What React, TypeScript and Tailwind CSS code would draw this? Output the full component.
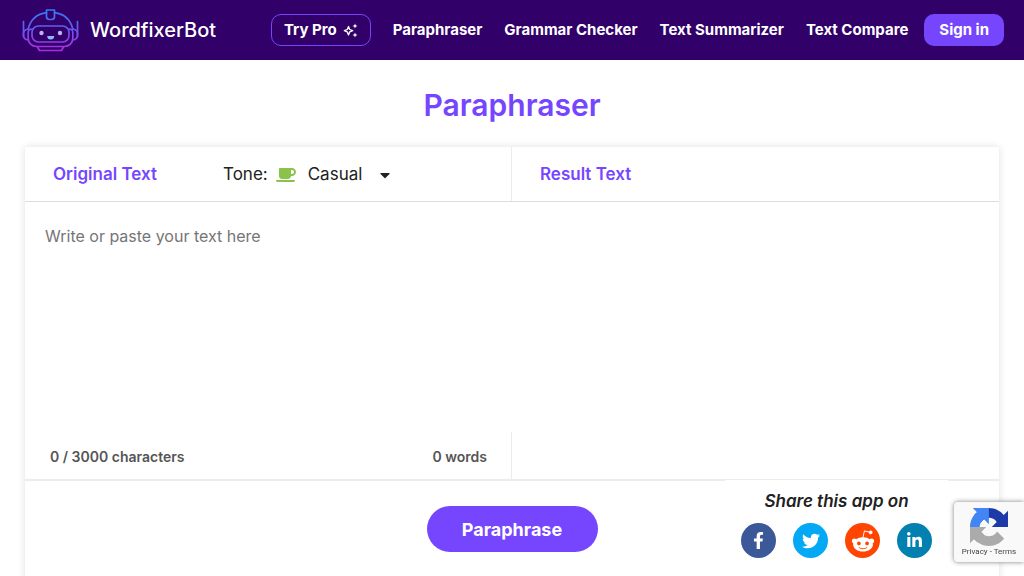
import { useState } from "react";
import {
  FaCaretDown,
  FaCoffee,
  FaFacebookF,
  FaLinkedinIn,
  FaRedditAlien,
  FaTwitter,
} from "react-icons/fa";

const navLinks = ["Paraphraser", "Grammar Checker", "Text Summarizer", "Text Compare"];

const shareLinks = [
  { name: "Facebook", Icon: FaFacebookF, color: "bg-[#3b5998]", size: 17 },
  { name: "Twitter", Icon: FaTwitter, color: "bg-[#03a9f4]", size: 18 },
  { name: "Reddit", Icon: FaRedditAlien, color: "bg-[#ff4500]", size: 24 },
  { name: "LinkedIn", Icon: FaLinkedinIn, color: "bg-[#0280b0]", size: 17 },
];

const RobotLogo = () => (
  <svg width="58" height="43" viewBox="0 0 58 43" fill="none" aria-hidden="true">
    <defs>
      <linearGradient id="robot" gradientUnits="userSpaceOnUse" x1="0" y1="0" x2="0" y2="43">
        <stop offset="0" stopColor="#2f7df6" />
        <stop offset="0.5" stopColor="#6a55f0" />
        <stop offset="1" stopColor="#b428e0" />
      </linearGradient>
    </defs>
    <g stroke="url(#robot)" strokeWidth="1.7" strokeLinecap="round" strokeLinejoin="round">
      <path d="M24.5 1h8v6.500a3 3 0 0 1-3 3h-2a3 3 0 0 1-3-3z" />
      <path d="M24.500 3.700C15 5 8.500 11 6.200 20M32.500 3.700C42 5 48.500 11 50.800 20" />
      <path d="M1.500 12.500v15M55.500 12.500v15" />
      <path d="M6.200 20c-3 .5-4.700 2-4.700 4.500v2c0 2.500 1.700 4 4.700 4.500M50.800 20c3 .5 4.700 2 4.700 4.500v2c0 2.500-1.700 4-4.700 4.500" />
      <path d="M10 20c-2.700 0-3.800 1.500-3.800 3.500V29c0 5 3.500 8.500 8.500 8.500h27.600c5 0 8.500-3.500 8.500-8.500v-5.500c0-2-1.100-3.500-3.800-3.500" />
      <rect x="10" y="17" width="37" height="16" rx="6.500" />
      <path d="M15.500 38l2 3.500h22l2-3.500" />
    </g>
    <circle cx="19.500" cy="24" r="2.200" fill="#b9b4f5" />
    <circle cx="38" cy="24" r="2.200" fill="#b9b4f5" />
    <path d="M25.200 27h7a3.500 3.500 0 0 1-7 0z" fill="#8fb8f8" />
  </svg>
);

const Sparkles = () => (
  <svg width="15" height="15" viewBox="0 0 15 15" fill="#fff" aria-hidden="true">
    <path
      d="M5.500 3.500l1.200 3 3 1.200-3 1.200-1.200 3-1.200-3-3-1.200 3-1.200z"
      fill="none"
      stroke="#fff"
      strokeWidth="1.300"
      strokeLinejoin="round"
    />
    <path d="M12 .5l.7 1.800 1.800.7-1.800.7-.7 1.800-.7-1.800-1.800-.7 1.800-.7zM12 9.500l.7 1.800 1.800.7-1.800.7-.7 1.800-.7-1.800-1.800-.7 1.800-.7z" />
  </svg>
);

const RecaptchaLogo = () => (
  <svg width="38" height="38" viewBox="0 0 64 64" aria-hidden="true">
    <path
      fill="#1c3aa9"
      d="M64 31.955l-.033-1.37V4.687l-7.16 7.16C50.948 4.674 42.033.093 32.05.093c-10.4 0-19.622 4.96-25.458 12.64l11.736 11.86a15.55 15.55 0 0 1 4.754-5.334c2.050-1.600 4.952-2.906 8.968-2.906.485 0 .86.057 1.135.163 4.976.393 9.288 3.140 11.828 7.124l-8.307 8.307L64 31.953"
    />
    <path
      fill="#4285f4"
      d="M31.862.094l-1.370.033H4.594l7.160 7.160C4.580 13.147 0 22.060 0 32.046c0 10.400 4.960 19.622 12.640 25.458L24.500 45.768a15.550 15.550 0 0 1-5.334-4.754c-1.600-2.050-2.906-4.952-2.906-8.968 0-.485.057-.86.163-1.135.393-4.976 3.140-9.288 7.124-11.828l8.307 8.307L31.860.095"
    />
    <path
      fill="#ababab"
      d="M.001 32.045l.033 1.370v25.898l7.160-7.160c5.860 7.173 14.774 11.754 24.760 11.754 10.400 0 19.622-4.960 25.458-12.640l-11.736-11.860a15.550 15.550 0 0 1-4.754 5.334c-2.050 1.600-4.952 2.906-8.968 2.906-.485 0-.86-.057-1.135-.163-4.976-.393-9.288-3.140-11.828-7.124l8.307-8.307L0 32.045"
    />
  </svg>
);

const Header = () => (
  <header className="flex h-[60px] items-center justify-between bg-[#310068] pl-[22px] pr-5 text-white">
    <a href="#home" className="flex items-center gap-[10px]">
      <RobotLogo />
      <span className="text-xl font-medium">WordfixerBot</span>
    </a>
    <nav className="flex items-center whitespace-nowrap text-[15px] font-bold">
      <a
        href="#pro"
        className="mr-[22px] flex h-8 items-center gap-[6px] rounded-[10px] border border-[#7646ff] px-3"
      >
        Try Pro
        <Sparkles />
      </a>
      <div className="flex gap-[22px]">
        {navLinks.map((link) => (
          <a key={link} href="#tools">
            {link}
          </a>
        ))}
      </div>
      <button type="button" className="ml-4 h-8 rounded-[10px] bg-[#7646ff] px-[15px]">
        Sign in
      </button>
    </nav>
  </header>
);

const Editor = () => {
  const [text, setText] = useState("");
  const words = text.trim() ? text.trim().split(/\s+/).length : 0;

  return (
    <section className="mx-[25px] mt-[22px] min-h-[480px] bg-white shadow-[0_0_8px_rgba(0,0,0,0.12)]">
      <div className="grid h-[55px] grid-cols-2 border-b border-[#dcdcdc]">
        <div className="flex items-center border-r border-[#ececec] pl-7 pt-[2px]">
          <label htmlFor="source" className="w-[170px] text-[17px] font-semibold text-[#7646ff]">
            Original Text
          </label>
          <div className="flex items-center text-[17px] text-[#212121]">
            <label htmlFor="tone">Tone:</label>
            <FaCoffee size={20} className="ml-2 text-[#8bc34a]" />
            <div className="relative ml-3 flex items-center">
              <select id="tone" className="w-[85px] appearance-none bg-transparent">
                <option>Casual</option>
                <option>Formal</option>
                <option>Creative</option>
              </select>
              <FaCaretDown size={16} className="pointer-events-none absolute right-0" />
            </div>
          </div>
        </div>
        <div className="flex items-center pl-7 pt-[2px]">
          <h2 className="text-[17px] font-semibold text-[#7646ff]">Result Text</h2>
        </div>
      </div>

      <div className="grid grid-cols-2 border-b-2 border-[#ececec]">
        <div>
          <textarea
            id="source"
            value={text}
            onChange={(e) => setText(e.target.value)}
            placeholder="Write or paste your text here"
            className="block h-[230px] w-full resize-none px-5 pt-[22px] text-base leading-6 outline-none placeholder:text-[#757575]"
          />
          <div className="flex h-[47px] items-center justify-between border-r border-[#ececec] pl-[25px] pr-6 pt-[2px] text-sm font-semibold text-[#555]">
            <span>{text.length} / 3000 characters</span>
            <span>{words} words</span>
          </div>
        </div>
        <div />
      </div>

      <div className="flex justify-center pt-[25px]">
        <button
          type="button"
          className="h-[46px] w-[171px] rounded-full bg-[#7646ff] pt-[2px] text-lg font-bold text-white"
        >
          Paraphrase
        </button>
      </div>
    </section>
  );
};

const ShareBar = () => (
  <aside className="fixed bottom-0 right-[76px] flex h-24 w-[223px] flex-col items-center bg-white pt-[9px]">
    <p className="text-[17px] font-semibold italic leading-6 text-[#212121]">Share this app on</p>
    <div className="mt-[10px] flex gap-[17px]">
      {shareLinks.map(({ name, Icon, color, size }) => (
        <a
          key={name}
          href="#share"
          aria-label={name}
          className={`flex size-[35px] items-center justify-center rounded-full text-white ${color}`}
        >
          <Icon size={size} />
        </a>
      ))}
    </div>
  </aside>
);

const RecaptchaBadge = () => (
  <div className="fixed bottom-[14px] right-0 flex h-[60px] w-[70px] flex-col items-center rounded-l-sm bg-[#f9f9f9] pt-[6px] shadow-[0_0_5px_gray]">
    <RecaptchaLogo />
    <div className="whitespace-nowrap font-[Roboto,sans-serif] text-[8px] leading-3 text-[#444]">
      <a href="#privacy">Privacy</a> - <a href="#terms">Terms</a>
    </div>
  </div>
);

export default function App() {
  return (
    <div className="h-screen overflow-hidden bg-white font-[Inter,sans-serif]">
      <Header />
      <main>
        <h1 className="pt-[25px] text-center text-3xl font-semibold leading-10 text-[#7646ff]">
          Paraphraser
        </h1>
        <Editor />
      </main>
      <ShareBar />
      <RecaptchaBadge />
    </div>
  );
}
